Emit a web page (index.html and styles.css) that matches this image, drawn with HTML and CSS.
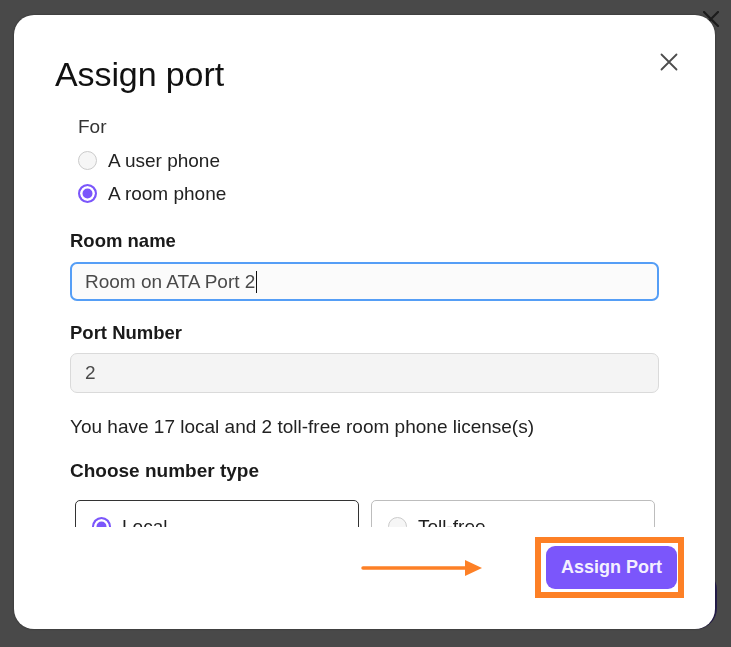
FILE: index.html
```html
<!DOCTYPE html>
<html lang="en">
<head>
  <meta charset="UTF-8">
  <title>Assign port</title>
  <link rel="stylesheet" href="styles.css">
</head>
<body>
  <!-- page underneath the dialog -->
  <div class="page">
    <div class="page-top">
      <svg class="page-close" width="16" height="16" viewBox="0 0 16 16">
        <path d="M1 1 L15 15 M15 1 L1 15" stroke="#1c1c1c" stroke-width="2.2" stroke-linecap="round" fill="none"/>
      </svg>
    </div>
    <div class="page-bottom">
      <div class="page-action"></div>
    </div>
  </div>

  <!-- assign port dialog -->
  <div class="modal">
    <div class="modal-head">
      <h1>Assign port</h1>
      <button class="close-btn" aria-label="Close">
        <svg width="24" height="24" viewBox="0 0 24 24">
          <path d="M4.5 4.5 L19.5 19.5 M19.5 4.5 L4.5 19.5" stroke="#4d4d4d" stroke-width="1.8" stroke-linecap="round" fill="none"/>
        </svg>
      </button>
    </div>

    <div class="modal-body">
      <div class="field-for">
        <div class="legend">For</div>
        <div class="radio-row"><span class="radio"></span>A user phone</div>
        <div class="radio-row"><span class="radio checked"></span>A room phone</div>
      </div>

      <div class="label label-room">Room name</div>
      <div class="text-input focused">Room on ATA Port 2<span class="caret"></span></div>

      <div class="label label-port">Port Number</div>
      <div class="text-input disabled">2</div>

      <p class="note">You have 17 local and 2 toll-free room phone license(s)</p>

      <div class="label label-type">Choose number type</div>
      <div class="type-cards">
        <div class="type-card selected">
          <span class="radio checked"></span>Local
        </div>
        <div class="type-card">
          <span class="radio"></span>Toll-free
        </div>
      </div>
    </div>

    <div class="modal-foot">
      <svg class="hint-arrow" width="121" height="18" viewBox="0 0 121 18">
        <line x1="2" y1="9" x2="108" y2="9" stroke="#fd8026" stroke-width="3.5" stroke-linecap="round"/>
        <polygon points="104,1 121,9 104,17" fill="#fd8026"/>
      </svg>
      <div class="highlight">
        <button class="primary-btn">Assign Port</button>
      </div>
    </div>
  </div>
</body>
</html>
```

FILE: styles.css
```css
* {
  box-sizing: border-box;
}

html, body {
  margin: 0;
  height: 100%;
}

body {
  font-family: "Liberation Sans", Arial, sans-serif;
  background: #494949;
  color: #1f1f1f;
  overflow: hidden;
}

/* dimmed page behind the dialog */
.page {
  height: 100%;
  display: flex;
  flex-direction: column;
  justify-content: space-between;
  padding: 11px 14px 18px 0;
}

.page-top {
  display: flex;
  justify-content: flex-end;
}

.page-close {
  margin-right: -2px;
}

.page-bottom {
  display: flex;
  justify-content: flex-end;
}

.page-action {
  width: 180px;
  height: 60px;
  background: #251d4c;
  border-radius: 21px;
}

/* dialog */
.modal {
  position: fixed;
  left: 14px;
  top: 15px;
  width: 701px;
  height: 614px;
  background: #fff;
  border-radius: 20px;
  box-shadow: 0 0 2px rgba(0,0,0,0.45);
  display: flex;
  flex-direction: column;
}

.modal-head {
  display: flex;
  justify-content: space-between;
  align-items: flex-start;
  padding: 39px 34px 16px 41px;
}

.modal-head h1 {
  margin: 0;
  font-size: 34px;
  line-height: 40px;
  font-weight: normal;
  color: #111;
  letter-spacing: -0.1px;
}

.close-btn {
  margin-top: -4px;
  width: 24px;
  height: 24px;
  padding: 0;
  border: none;
  background: none;
  cursor: pointer;
}

.modal-body {
  height: 417px;
  overflow: hidden;
  padding: 0 56px;
  font-size: 19px;
}

.field-for {
  padding-left: 8px;
}

.legend {
  line-height: 34px;
  color: #333;
}

.radio-row {
  height: 33px;
  display: flex;
  align-items: center;
  gap: 11px;
  color: #222;
}

.radio {
  width: 19px;
  height: 19px;
  flex: none;
  border-radius: 50%;
  border: 1.5px solid #cbcbcb;
  background: #f6f6f6;
}

.radio.checked {
  border: 2px solid #7b56fb;
  background: #7b56fb;
  box-shadow: inset 0 0 0 2.5px #fff;
}

.label {
  font-size: 18.5px;
  font-weight: bold;
  line-height: 24px;
  color: #1a1a1a;
}

.label-room {
  margin-top: 19px;
  margin-bottom: 9px;
}

.label-port {
  margin-top: 20px;
  margin-bottom: 8px;
}

.label-type {
  margin-top: 20px;
  font-size: 19px;
}

.text-input {
  display: flex;
  align-items: center;
  height: 40px;
  padding: 0 13px;
  border-radius: 7px;
  color: #4a4a4a;
}

.text-input.focused {
  height: 39px;
  border: 2px solid #559ef6;
  background: #fbfbfb;
}

.text-input.disabled {
  border: 1px solid #dadada;
  background: #f4f4f4;
  padding-left: 14px;
}

.caret {
  width: 1px;
  height: 22px;
  margin-left: 1px;
  background: #111;
}

.note {
  margin: 22px 0 0;
  line-height: 24px;
  color: #222;
}

/* cards continue below the fold of the scroll area */
.type-cards {
  display: grid;
  grid-template-columns: 1fr 1fr;
  gap: 12px;
  margin-top: 17px;
  padding: 0 4px 0 5px;
}

.type-card {
  display: flex;
  align-items: flex-start;
  gap: 11px;
  height: 70px;
  padding: 15px 16px 0;
  border: 1px solid #bdbdbd;
  border-radius: 5px;
  line-height: 21px;
}

.type-card.selected {
  border: 1.5px solid #333;
}

.type-card .radio {
  margin-top: 1px;
}

.modal-foot {
  flex: 1;
  display: flex;
  justify-content: flex-end;
  align-items: flex-start;
  gap: 53px;
  padding: 10px 31px 0 0;
}

.hint-arrow {
  margin-top: 22px;
}

.highlight {
  border: 6px solid #fd8026;
  padding: 3px 1px 3px 5px;
  background: #fff;
}

.primary-btn {
  display: block;
  width: 131px;
  height: 43px;
  border: none;
  border-radius: 9px;
  background: #7b56fb;
  color: #f4f0ff;
  font-family: inherit;
  font-size: 18px;
  font-weight: bold;
  cursor: pointer;
}
```
